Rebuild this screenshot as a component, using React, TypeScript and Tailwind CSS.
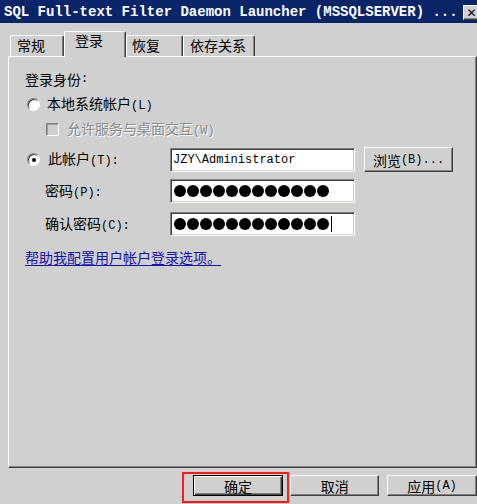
import React from "react";

const A = ({ children }: { children: React.ReactNode }) => (
  <span className="font-['Liberation_Mono',monospace] text-[12px]">{children}</span>
);

const raised =
  "border border-t-white border-l-white border-r-[#404040] border-b-[#404040] shadow-[inset_-1px_-1px_0_#808080]";
const sunken =
  "border border-t-[#808080] border-l-[#808080] border-r-white border-b-white shadow-[inset_1px_1px_0_#404040,inset_-1px_-1px_0_#d4d0c8]";

const Dots = ({ n, cursor }: { n: number; cursor?: boolean }) => (
  <div className="flex items-center gap-[1px] pl-[3px]">
    {Array.from({ length: n }).map((_, i) => (
      <div key={i} className="w-[12px] h-[12px] rounded-full bg-black" />
    ))}
    {cursor && <div className="w-[1px] h-[16px] bg-black ml-[1px]" />}
  </div>
);

const Radio = ({ checked }: { checked?: boolean }) => (
  <div className="ml-[2px] w-[13px] h-[13px] rounded-full bg-white border border-t-[#808080] border-l-[#808080] border-r-white border-b-white shadow-[inset_1px_1px_0_#404040] flex items-center justify-center shrink-0">
    {checked && <div className="w-[4px] h-[4px] rounded-full bg-black" />}
  </div>
);

export default function App() {
  return (
    <div className="w-[477px] h-[504px] bg-[#d0d0d0] overflow-hidden flex flex-col font-['Noto_Sans_CJK_SC',sans-serif] text-[14px] leading-[16px] text-black">
      {/* title bar */}
      <div className="h-[23px] bg-[#0a246a] flex items-center pl-[4px] shrink-0">
        <span className="font-['Liberation_Mono',monospace] font-bold text-[14px] text-white whitespace-nowrap">
          SQL Full-text Filter Daemon Launcher (MSSQLSERVER) ...
        </span>
        <div className={`ml-auto -mr-[3px] mt-[2px] w-[17px] h-[15px] bg-[#d0d0d0] ${raised} flex items-center justify-center shrink-0`}>
          <span className="font-['DejaVu_Sans',sans-serif] font-bold text-[12px] leading-none">✕</span>
        </div>
      </div>

      {/* tabs */}
      <div className="mt-[8px] pl-[10px] h-[25px] flex items-start shrink-0">
        <div className="mt-[4px] w-[54px] h-[21px] border-t border-l border-white border-r border-r-[#404040] border-b-0 shadow-[inset_-1px_0_0_#808080] rounded-t-[2px] pl-[6px] pt-[1px]">
          常规
        </div>
        <div className="relative z-10 w-[62px] h-[26px] bg-[#d0d0d0] border-t border-l border-white border-r border-r-[#404040] border-b-0 shadow-[inset_-1px_0_0_#808080] rounded-t-[2px] pl-[10px]">
          登录
        </div>
        <div className="mt-[4px] w-[57px] h-[21px] border-t border-l border-white border-r border-r-[#404040] border-b-0 shadow-[inset_-1px_0_0_#808080] rounded-t-[2px] pl-[5px] pt-[1px]">
          恢复
        </div>
        <div className="mt-[4px] w-[72px] h-[21px] border-t border-l border-white border-r border-r-[#404040] border-b-0 shadow-[inset_-1px_0_0_#808080] rounded-t-[2px] pl-[6px] pt-[1px]">
          依存关系
        </div>
      </div>

      {/* panel */}
      <div className="ml-[8px] w-[469px] h-[412px] shrink-0 border border-t-white border-l-white border-r-[#404040] border-b-[#404040] shadow-[inset_-1px_-1px_0_#808080] flex flex-col pl-[16px]">
        <div className="mt-[14px] h-[16px] flex items-center">
          登录身份<A>:</A>
        </div>
        <div className="mt-[9px] h-[16px] flex items-center">
          <Radio />
          <span className="ml-[7px]">
            本地系统帐户<A>(L)</A>
          </span>
        </div>
        <div className="mt-[9px] h-[16px] flex items-center pl-[21px]">
          <div className="w-[13px] h-[13px] bg-[#d0d0d0] border border-t-[#808080] border-l-[#808080] border-r-white border-b-white shadow-[inset_1px_1px_0_#a0a0a0]" />
          <span className="ml-[8px] text-[#8a8a8a] [text-shadow:1px_1px_0_#fff]">
            允许服务与桌面交互<A>(W)</A>
          </span>
        </div>
        <div className="mt-[10px] h-[25px] flex items-center">
          <div className="w-[145px] flex items-center">
            <Radio checked />
            <span className="ml-[8px]">
              此帐户<A>(T):</A>
            </span>
          </div>
          <div className={`w-[185px] h-[24px] bg-white ${sunken} flex items-center pl-[2px]`}>
            <span className="font-['Liberation_Mono',monospace] text-[12px]">JZY\Administrator</span>
          </div>
          <div className={`ml-[9px] w-[89px] h-[25px] ${raised} flex items-center justify-center`}>
            浏览<A>(B)...</A>
          </div>
        </div>
        <div className="mt-[7px] h-[24px] flex items-center">
          <div className="w-[145px] pl-[20px]">
            密码<A>(P):</A>
          </div>
          <div className={`w-[185px] h-[24px] bg-white ${sunken} flex items-center`}>
            <Dots n={12} />
          </div>
        </div>
        <div className="mt-[9px] h-[24px] flex items-center">
          <div className="w-[145px] pl-[20px]">
            确认密码<A>(C):</A>
          </div>
          <div className={`w-[185px] h-[24px] bg-white ${sunken} flex items-center`}>
            <Dots n={12} cursor />
          </div>
        </div>
        <div className="mt-[13px] h-[16px] flex items-center">
          <span className="text-[#1a0fb0] underline underline-offset-2">帮助我配置用户帐户登录选项。</span>
        </div>
      </div>

      {/* buttons */}
      <div className="mt-[4px] pl-[182px] flex items-start shrink-0">
        <div className="w-[108px] h-[31px] border-2 border-[#ff1a1a] pl-[9px] pt-[1px]">
          <div className="w-[90px] h-[21px] border border-black shadow-[inset_1px_1px_0_#fff,inset_-1px_-1px_0_#404040,inset_-2px_-2px_0_#808080] flex items-center justify-center">
            确定
          </div>
        </div>
        <div className={`ml-[1px] mt-[3px] w-[89px] h-[21px] ${raised} flex items-center justify-center`}>
          取消
        </div>
        <div className={`ml-[8px] mt-[3px] w-[90px] h-[21px] ${raised} flex items-center justify-center shrink-0`}>
          应用<A>(A)</A>
        </div>
      </div>
    </div>
  );
}
